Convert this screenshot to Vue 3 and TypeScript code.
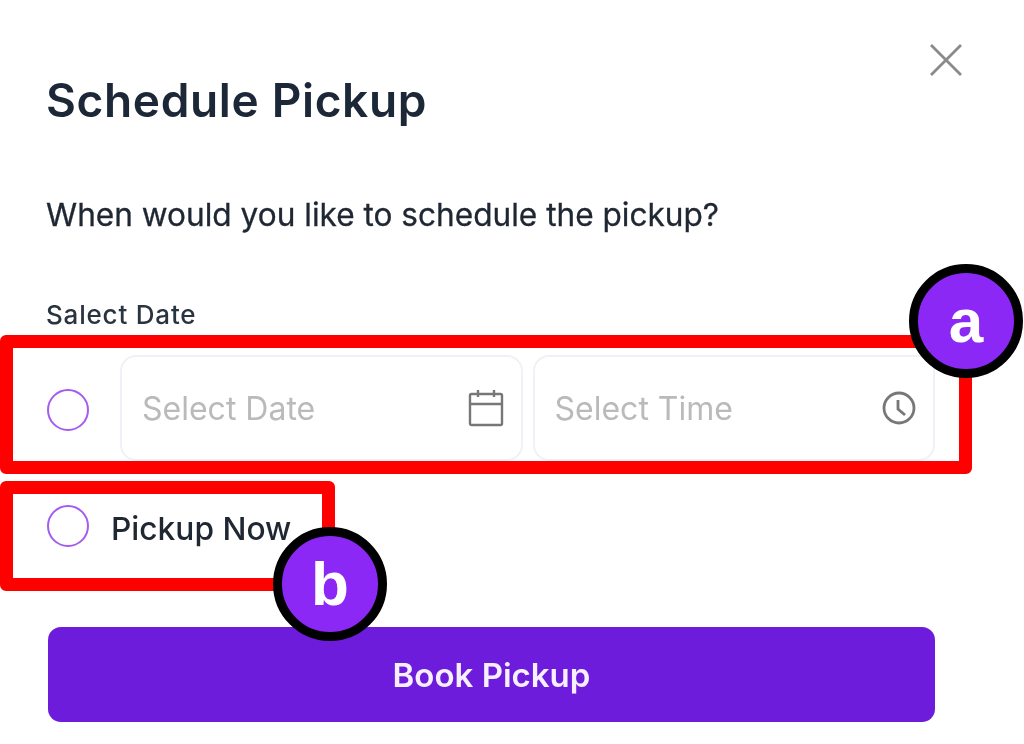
<script setup lang="ts">
const fields = [
  { label: 'Select Date', icon: 'calendar' },
  { label: 'Select Time', icon: 'clock' },
]
</script>

<template>
  <div class="page">
    <div class="dialog">
      <button class="close" aria-label="Close">
        <svg width="34" height="34" viewBox="0 0 34 34"><path d="M2 2 L32 32 M32 2 L2 32" stroke="#8a8a8a" stroke-width="2.8" fill="none" /></svg>
      </button>
      <h1 class="title">Schedule Pickup</h1>
      <p class="question">When would you like to schedule the pickup?</p>
      <div class="label">Salect Date</div>
      <div class="row">
        <span class="radio row-radio"></span>
        <div class="fields">
          <div v-for="f in fields" :key="f.label" class="field">
            <span class="placeholder">{{ f.label }}</span>
            <svg v-if="f.icon === 'calendar'" class="cal" width="36" height="38" viewBox="0 0 36 38" fill="none" stroke="#777" stroke-width="2.4">
              <rect x="2" y="5" width="32" height="31" rx="1.5" />
              <path d="M2 15 H34 M10 1 V8 M26 1 V8" />
            </svg>
            <svg v-else class="clk" width="34" height="34" viewBox="0 0 34 34" fill="none" stroke="#777" stroke-width="2.8">
              <circle cx="17" cy="17" r="15" />
              <path d="M16 9 V18 L23 24" />
            </svg>
          </div>
        </div>
      </div>
      <div class="now">
        <span class="radio"></span>
        <span class="now-text">Pickup Now</span>
      </div>
      <button class="book">Book Pickup</button>
    </div>

    <div class="mark mark-a"></div>
    <div class="mark mark-b"></div>
    <div class="badge badge-a">a</div>
    <div class="badge badge-b">b</div>
  </div>
</template>

<style>
html, body { margin: 0; background: #fff; }
</style>

<style scoped>
.page {
  position: relative;
  width: 1024px;
  height: 744px;
  overflow: hidden;
  background: #fff;
  font-family: Inter, "Noto Sans", sans-serif;
  color: #1a2330;
}
.dialog {
  position: relative;
  box-sizing: border-box;
  height: 100%;
  padding: 72px 89px 0 48px;
  filter: blur(0.6px);
}
.close {
  position: absolute;
  left: 929px;
  top: 43px;
  width: 34px;
  height: 34px;
  padding: 0;
  border: 0;
  background: none;
}
.close svg { display: block; }
.title {
  margin: 0 0 0 -2px;
  height: 56px;
  font-size: 46px;
  line-height: 56px;
  font-weight: 600;
  letter-spacing: 0.65px;
  color: #1c2838;
}
.question {
  margin: 67px 0 0 -2px;
  height: 40px;
  font-size: 31.6px;
  line-height: 40px;
  font-weight: 400;
  -webkit-text-stroke: 0.3px #1f2733;
  color: #1f2733;
}
.label {
  margin: 64px 0 0 -2px;
  height: 32px;
  font-size: 26px;
  line-height: 32px;
  font-weight: 500;
  letter-spacing: 0.8px;
  color: #2a3340;
}
.row {
  display: flex;
  align-items: center;
  margin-top: 24px;
  height: 106px;
}
.radio {
  flex: none;
  box-sizing: border-box;
  width: 42px;
  height: 42px;
  margin-left: -1px;
  border: 2.5px solid #a35cf0;
  border-radius: 50%;
}
.row-radio { margin-top: 4px; }
.fields {
  display: flex;
  flex: 1;
  gap: 10px;
  margin-left: 31px;
  height: 100%;
}
.field {
  flex: 1;
  display: flex;
  align-items: center;
  justify-content: space-between;
  box-sizing: border-box;
  padding: 0 17px 0 20px;
  border: 2px solid #eef2f7;
  border-radius: 16px;
}
.placeholder {
  font-size: 32px;
  color: #bababa;
}
.now {
  display: flex;
  align-items: center;
  gap: 22px;
  margin-top: 44px;
  height: 42px;
}
.now-text {
  font-size: 31.7px;
  font-weight: 500;
  color: #1f2733;
  position: relative;
  top: 2px;
}
.book {
  display: block;
  width: 887px;
  height: 95px;
  margin-top: 80px;
  border: 0;
  border-radius: 13px;
  background: #6d1cdc;
  color: #f6efff;
  font-family: inherit;
  font-size: 33px;
  font-weight: 600;
}
.mark {
  position: absolute;
  box-sizing: border-box;
  border: 13px solid #ff0000;
  border-radius: 6px;
}
.mark-a { left: 0; top: 335px; width: 972px; height: 139px; }
.mark-b { left: 0; top: 481px; width: 335px; height: 110px; }
.badge {
  position: absolute;
  box-sizing: border-box;
  width: 114px;
  height: 114px;
  display: flex;
  align-items: center;
  justify-content: center;
  border: 9px solid #000;
  border-radius: 50%;
  background: #8c28f6;
  color: #fff;
  font-family: "Liberation Sans", Arial, sans-serif;
  font-size: 62px;
  font-weight: 700;
  line-height: 1;
}
.badge-a { left: 909px; top: 264px; }
.badge-b { left: 273px; top: 527px; }
</style>
